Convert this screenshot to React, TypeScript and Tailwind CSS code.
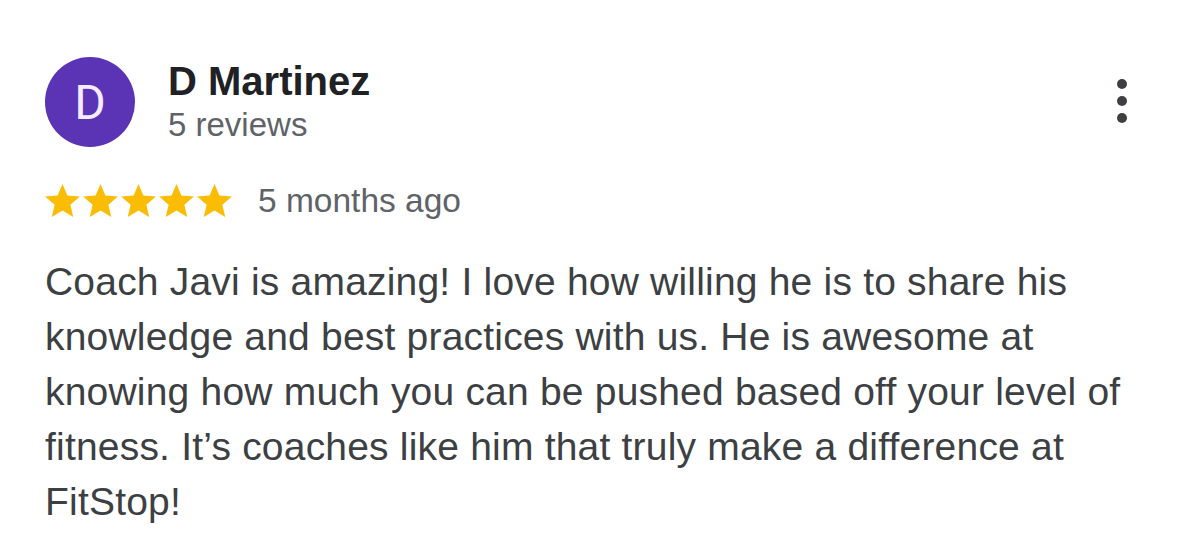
const Star = () => (
  <svg viewBox="2 2 20 19" className="w-[35px] h-[33px]" fill="#fbbc04">
    <path d="M12 17.27L18.18 21l-1.64-7.03L22 9.24l-7.19-.61L12 2 9.19 8.63 2 9.24l5.46 4.73L5.82 21z" />
  </svg>
);

const App = () => {
  return (
    <div className="w-[1200px] h-[550px] bg-white overflow-hidden pl-[45px] pr-[40px] pt-[57px] font-['Liberation_Sans',Arial,sans-serif]">
      {/* header */}
      <div className="flex items-start">
        <div className="h-[90px] w-[90px] shrink-0 rounded-full bg-[#5b34b5] flex items-center justify-center">
          <span className="text-[48px] leading-none text-[#f5ecff] font-['Roboto',sans-serif] pt-[2px]">
            D
          </span>
        </div>
        <div className="ml-[33px] mt-[4px] flex flex-col">
          <span className="text-[40px] leading-[40px] font-bold text-[#202124]">
            D Martinez
          </span>
          <span className="mt-[7px] text-[33px] leading-[33px] text-[#5f6368]">
            5 reviews
          </span>
        </div>
        <div className="ml-auto mt-[22px] mr-[33px] flex flex-col gap-[7px] items-center">
          <span className="h-[10px] w-[10px] rounded-full bg-[#3c4043]" />
          <span className="h-[10px] w-[10px] rounded-full bg-[#3c4043]" />
          <span className="h-[10px] w-[10px] rounded-full bg-[#3c4043]" />
        </div>
      </div>

      {/* rating */}
      <div className="flex items-center mt-[37px] h-[33px]">
        <div className="flex gap-[3px]">
          <Star />
          <Star />
          <Star />
          <Star />
          <Star />
        </div>
        <span className="ml-[26px] text-[33.5px] leading-[33.5px] text-[#5f6368]">
          5 months ago
        </span>
      </div>

      {/* body */}
      <p className="mt-[37px] w-[1105px] text-[39px] leading-[55px] tracking-[0.2px] text-[#3c4043]">
        Coach Javi is amazing! I love how willing he is to share his knowledge
        and best practices with us. He is awesome at knowing how much you can be
        pushed based off your level of fitness. It’s coaches like him that truly
        make a difference at FitStop!
      </p>
    </div>
  );
};

export default App;
